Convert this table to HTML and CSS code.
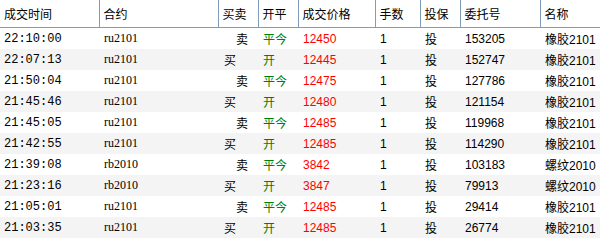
FILE: index.html
```html
<!DOCTYPE html>
<html>
<head>
<meta charset="utf-8">
<link rel="stylesheet" href="styles.css">
</head>
<body>
<table class="grid">
  <colgroup>
    <col class="c-time"><col class="c-code"><col class="c-dir"><col class="c-oc"><col class="c-price"><col class="c-qty"><col class="c-hedge"><col class="c-order"><col class="c-name">
  </colgroup>
  <thead>
    <tr><th>成交时间</th><th>合约</th><th>买卖</th><th>开平</th><th>成交价格</th><th>手数</th><th>投保</th><th>委托号</th><th>名称</th></tr>
  </thead>
  <tbody>
    <tr><td class="time">22:10:00</td><td class="code">ru2101</td><td class="sell">卖</td><td class="oc">平今</td><td class="price">12450</td><td>1</td><td>投</td><td>153205</td><td>橡胶2101</td></tr>
    <tr><td class="time">22:07:13</td><td class="code">ru2101</td><td class="buy">买</td><td class="oc">开</td><td class="price">12445</td><td>1</td><td>投</td><td>152747</td><td>橡胶2101</td></tr>
    <tr><td class="time">21:50:04</td><td class="code">ru2101</td><td class="sell">卖</td><td class="oc">平今</td><td class="price">12475</td><td>1</td><td>投</td><td>127786</td><td>橡胶2101</td></tr>
    <tr><td class="time">21:45:46</td><td class="code">ru2101</td><td class="buy">买</td><td class="oc">开</td><td class="price">12480</td><td>1</td><td>投</td><td>121154</td><td>橡胶2101</td></tr>
    <tr><td class="time">21:45:05</td><td class="code">ru2101</td><td class="sell">卖</td><td class="oc">平今</td><td class="price">12485</td><td>1</td><td>投</td><td>119968</td><td>橡胶2101</td></tr>
    <tr><td class="time">21:42:55</td><td class="code">ru2101</td><td class="buy">买</td><td class="oc">开</td><td class="price">12485</td><td>1</td><td>投</td><td>114290</td><td>橡胶2101</td></tr>
    <tr><td class="time">21:39:08</td><td class="code">rb2010</td><td class="sell">卖</td><td class="oc">平今</td><td class="price">3842</td><td>1</td><td>投</td><td>103183</td><td>螺纹2010</td></tr>
    <tr><td class="time">21:23:16</td><td class="code">rb2010</td><td class="buy">买</td><td class="oc">开</td><td class="price">3847</td><td>1</td><td>投</td><td>79913</td><td>螺纹2010</td></tr>
    <tr><td class="time">21:05:01</td><td class="code">ru2101</td><td class="sell">卖</td><td class="oc">平今</td><td class="price">12485</td><td>1</td><td>投</td><td>29414</td><td>橡胶2101</td></tr>
    <tr><td class="time">21:03:35</td><td class="code">ru2101</td><td class="buy">买</td><td class="oc">开</td><td class="price">12485</td><td>1</td><td>投</td><td>26774</td><td>橡胶2101</td></tr>
  </tbody>
</table>
</body>
</html>
```

FILE: styles.css
```css
html, body {
  margin: 0;
  background: #ffffff;
}
.grid {
  border-collapse: collapse;
  table-layout: fixed;
  width: 600px;
  font-family: "Liberation Sans", "Noto Sans CJK SC", sans-serif;
  font-size: 12px;
  color: #000;
}
.c-time { width: 99px; }
.c-code { width: 119px; }
.c-dir { width: 40px; }
.c-oc { width: 40px; }
.c-price { width: 77px; }
.c-qty { width: 45px; }
.c-hedge { width: 40px; }
.c-order { width: 80px; }
.c-name { width: 60px; }

.grid th {
  height: 27px;
  padding: 0 0 0 4px;
  text-align: left;
  font-weight: normal;
  font-family: "Noto Sans CJK SC", sans-serif;
  font-size: 12px;
  border-left: 1px solid #7f9db9;
  border-bottom: 1px solid #7f9db9;
  white-space: nowrap;
  overflow: hidden;
}
.grid th:first-child {
  border-left: none;
}
.grid td {
  height: 21px;
  padding: 0 0 0 5px;
  white-space: nowrap;
  overflow: hidden;
}
.grid td:first-child {
  padding-left: 4px;
}
.grid tbody tr:nth-child(even) td {
  background: #f4f4f4;
}
.time {
  font-family: "Liberation Mono", monospace;
  font-size: 12px;
}
.code {
  font-family: "Liberation Serif", serif;
  font-size: 12px;
}
.buy { padding-left: 6px !important; }
.sell { padding-left: 18px !important; }
.oc { color: #008000; }
.price { color: #ff0000; }
```
